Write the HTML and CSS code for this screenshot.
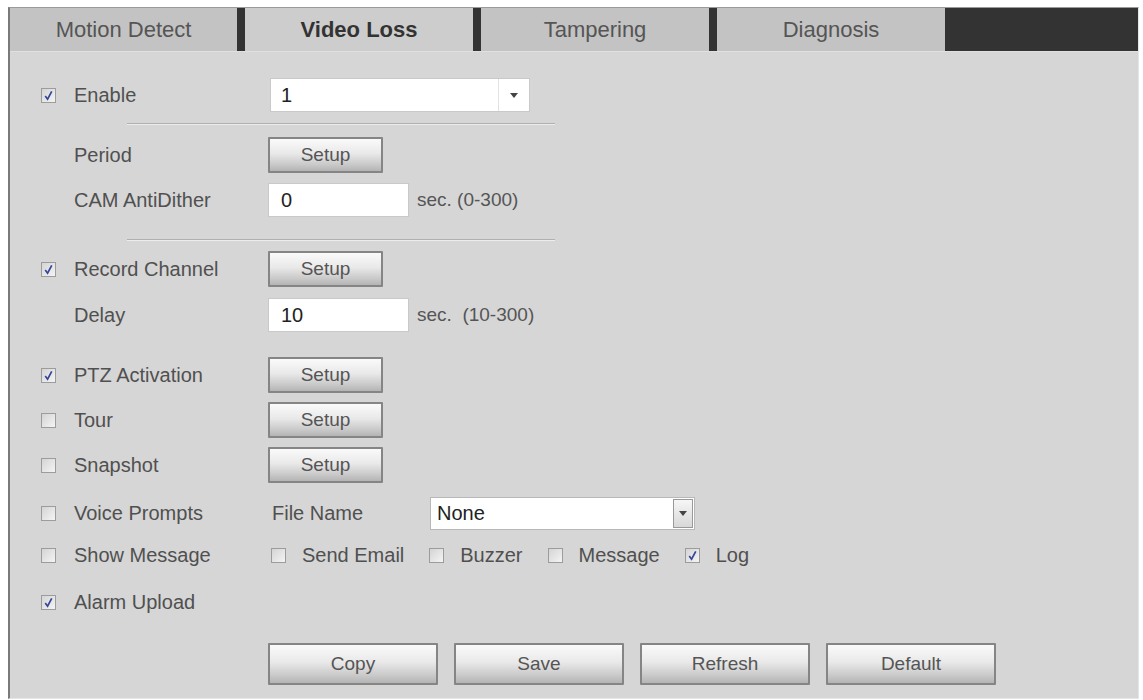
FILE: index.html
```html
<!DOCTYPE html>
<html>
<head>
    <meta name='viewport' content='width=device-width, initial-scale=1.0'>
    <title>Video Loss</title>
    <link rel="stylesheet" href="styles.css">
</head>
<body>
    <div class='panel'>
        <div class='tabs'>
            <div class='tab first'>Motion Detect</div>
            <div class='tab active'>Video Loss</div>
            <div class='tab'>Tampering</div>
            <div class='tab last'>Diagnosis</div>
            <div class='tab-fill'></div>
        </div>

        <div class='form'>
            <div class='row first-row'>
                <div class='lbl'><span class='cb on'><svg viewBox='0 0 14 14'><path d='M3.5 7.5 L6 11 L10.5 2.5'/></svg></span>Enable</div>
                <div class='select channel'><span class='val'>1</span><span class='drop'><i class='tri'></i></span></div>
            </div>
            <div class='rule'></div>

            <div class='row sp-12'>
                <div class='lbl plain'>Period</div>
                <button class='btn setup'>Setup</button>
            </div>
            <div class='row'>
                <div class='lbl plain'>CAM AntiDither</div>
                <div class='text'>0</div>
                <span class='unit'>sec. (0-300)</span>
            </div>
            <div class='rule wide-gap'></div>

            <div class='row sp-10'>
                <div class='lbl'><span class='cb on'><svg viewBox='0 0 14 14'><path d='M3.5 7.5 L6 11 L10.5 2.5'/></svg></span>Record Channel</div>
                <button class='btn setup'>Setup</button>
            </div>
            <div class='row sp-10'>
                <div class='lbl plain'>Delay</div>
                <div class='text'>10</div>
                <span class='unit'>sec.&nbsp; (10-300)</span>
            </div>

            <div class='row sp-24'>
                <div class='lbl'><span class='cb on'><svg viewBox='0 0 14 14'><path d='M3.5 7.5 L6 11 L10.5 2.5'/></svg></span>PTZ Activation</div>
                <button class='btn setup'>Setup</button>
            </div>
            <div class='row'>
                <div class='lbl'><span class='cb'></span>Tour</div>
                <button class='btn setup'>Setup</button>
            </div>
            <div class='row'>
                <div class='lbl'><span class='cb'></span>Snapshot</div>
                <button class='btn setup'>Setup</button>
            </div>

            <div class='row sp-12'>
                <div class='lbl'><span class='cb'></span>Voice Prompts</div>
                <div class='fname'>File Name</div>
                <div class='select file'><span class='val'>None</span><span class='drop boxed'><i class='tri'></i></span></div>
            </div>
            <div class='row sp-6'>
                <div class='lbl'><span class='cb'></span>Show Message</div>
                <div class='opts'>
                    <div class='opt'><span class='cb'></span>Send Email</div>
                    <div class='opt'><span class='cb'></span>Buzzer</div>
                    <div class='opt'><span class='cb'></span>Message</div>
                    <div class='opt'><span class='cb on'><svg viewBox='0 0 14 14'><path d='M3.5 7.5 L6 11 L10.5 2.5'/></svg></span>Log</div>
                </div>
            </div>
            <div class='row sp-11'>
                <div class='lbl'><span class='cb on'><svg viewBox='0 0 14 14'><path d='M3.5 7.5 L6 11 L10.5 2.5'/></svg></span>Alarm Upload</div>
            </div>

            <div class='actions'>
                <button class='btn big'>Copy</button>
                <button class='btn big'>Save</button>
                <button class='btn big'>Refresh</button>
                <button class='btn big'>Default</button>
            </div>
        </div>
    </div>
</body>
</html>
```

FILE: styles.css
```css
body {
    margin: 0;
    background-color: #ffffff;
    font-family: "Liberation Sans", Arial, sans-serif;
    color: #555;
}
.panel {
    margin: 7px 0 0 8px;
    width: 1128px;
    height: 690px;
    background-color: #d6d6d6;
    border-top: 1px solid #9a9a9a;
    border-left: 2px solid #7a7a7a;
    border-right: 1px solid #e6e6e6;
    border-bottom: 1px solid #e6e6e6;
}

/* tab strip */
.tabs {
    display: flex;
    height: 43px;
    border-bottom: 1px solid #e0e0e0;
}
.tab {
    width: 228px;
    background-color: #c3c3c3;
    border-right: 8px solid #333;
    font-size: 22px;
    line-height: 43px;
    text-align: center;
    color: #555;
}
.tab.first {
    width: 227px;
}
.tab.active {
    background-color: #cdcdcd;
    color: #333;
    font-weight: bold;
}
.tab.last {
    border-right: none;
}
.tab-fill {
    flex: 1;
    background-color: #333;
}

/* form rows */
.form {
    padding: 25px 0 0 31px;
}
.row {
    display: flex;
    align-items: center;
    height: 36px;
    margin-top: 9px;
}
.row.first-row {
    margin-top: 0;
}

.rule {
    margin: 10px 0 0 86px;
    width: 428px;
    border-top: 1px solid #b0b0b0;
    border-bottom: 1px solid #ececec;
}
.rule.wide-gap {
    margin-top: 21px;
}

.sp-6 { margin-top: 6px; }
.sp-10 { margin-top: 10px; }
.sp-11 { margin-top: 11px; }
.sp-12 { margin-top: 12px; }
.sp-24 { margin-top: 24px; }

.lbl {
    width: 227px;
    display: flex;
    align-items: center;
    gap: 18px;
    font-size: 20px;
    color: #505050;
}
.lbl.plain {
    padding-left: 33px;
    width: 194px;
}

/* checkboxes */
.cb {
    width: 13px;
    height: 13px;
    border: 1px solid #9c9c9c;
    background: linear-gradient(135deg, #d4d4d4, #f4f4f4);
    display: inline-block;
    flex-shrink: 0;
}
.cb svg {
    display: block;
    width: 13px;
    height: 13px;
}
.cb svg path {
    fill: none;
    stroke: #34449a;
    stroke-width: 1.8;
}

/* inputs */
.text {
    width: 127px;
    height: 32px;
    background-color: #fff;
    border: 1px solid #c9c9c9;
    padding-left: 12px;
    font-size: 20px;
    line-height: 32px;
    color: #222;
}
.unit {
    margin-left: 8px;
    font-size: 19px;
    color: #555;
}

.select {
    display: flex;
    background-color: #fff;
    border: 1px solid #c9c9c9;
    font-size: 20px;
    color: #222;
}
.select .val {
    flex: 1;
    padding-left: 10px;
}
.select.channel {
    width: 258px;
    height: 32px;
    line-height: 32px;
    margin-left: 2px;
}
.select.channel .drop {
    width: 30px;
    border-left: 1px solid #e2e2e2;
}
.select.file {
    width: 263px;
    height: 31px;
    line-height: 31px;
    border-color: #b8b8b8;
}
.select.file .val {
    padding-left: 6px;
}
.drop {
    display: flex;
    align-items: center;
    justify-content: center;
}
.drop.boxed {
    width: 18px;
    margin: 1px;
    border: 1px solid #999;
    background: linear-gradient(#f6f6f6, #d8d8d8);
}
.tri {
    width: 0;
    height: 0;
    border-left: 4px solid transparent;
    border-right: 4px solid transparent;
    border-top: 5px solid #444;
}

.fname {
    width: 158px;
    padding-left: 4px;
    font-size: 20px;
    color: #505050;
}

.opts {
    display: flex;
    align-items: center;
    gap: 25px;
    margin-left: 3px;
}
.opt {
    display: flex;
    align-items: center;
    gap: 16px;
    font-size: 20px;
    color: #505050;
}

/* buttons */
.btn {
    font-family: "Liberation Sans", Arial, sans-serif;
    color: #555;
    border: 2px solid #858585;
    border-radius: 1px;
    background: linear-gradient(#fafafa 0%, #e9e9e9 45%, #c9c9c9 80%, #b4b4b4 100%);
    padding: 0;
    cursor: pointer;
}
.btn.setup {
    width: 115px;
    height: 36px;
    font-size: 19px;
}
.actions {
    display: flex;
    gap: 16px;
    margin: 23px 0 0 227px;
}
.btn.big {
    width: 170px;
    height: 42px;
    font-size: 19px;
}
```
